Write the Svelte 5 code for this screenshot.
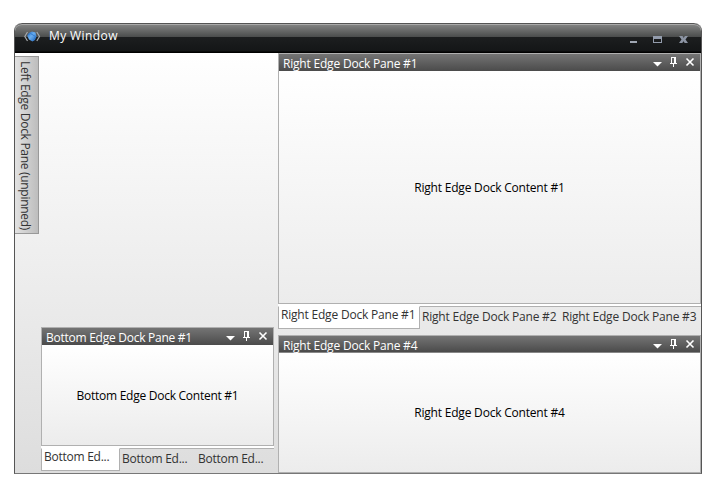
<script>
  const rightTabs = ['Right Edge Dock Pane #1', 'Right Edge Dock Pane #2', 'Right Edge Dock Pane #3'];
  const bottomTabs = ['Bottom Ed...', 'Bottom Ed...', 'Bottom Ed...'];
</script>

{#snippet pane(title, content, kind)}
  <section class="pane {kind}">
    <header>
      <span class="title">{title}</span>
      <svg class="tools" width="44" height="16" viewBox="0 0 44 16">
        <path d="M0 8h9L4.500 12.500z" fill="#fff" />
        <path d="M18.500 3v6M21.500 3v6M22.500 3v6M18 3.500h5M17 9.500h7M20.500 10v3" stroke="#fff" fill="none" />
        <path d="M33.500 4.500l7 7M40.500 4.500l-7 7" stroke="#fff" stroke-width="1.600" fill="none" />
      </svg>
    </header>
    <div class="body"><span>{content}</span></div>
  </section>
{/snippet}

<div class="window">
  <div class="titlebar">
    <svg class="logo" width="18" height="14" viewBox="0 0 18 14">
      <defs>
        <linearGradient id="gem" x1="0" y1="0" x2="1" y2="1">
          <stop offset="0" stop-color="#2467b9" />
          <stop offset=".45" stop-color="#69aef0" />
          <stop offset="1" stop-color="#1b5fb4" />
        </linearGradient>
      </defs>
      <path d="M3.500 3L.8 7.500 3.500 12M12.800 3l2.700 4.500L12.800 12" fill="none" stroke="#a5a9ac" stroke-width="1.200" />
      <path d="M8 2.500l3.500 1 1 4-1.500 3.500-2.500 1.500L5 10.500 3.300 7l1.500-3z" fill="url(#gem)" />
      <path d="M3.500 6l3-1.500 5 3-2 4" fill="none" stroke="#2f78cd" stroke-width=".9" />
    </svg>
    <span class="caption">My Window</span>
    <svg class="controls" width="60" height="12" viewBox="0 0 60 12">
      <path d="M0 8h7v2H0z" fill="#a0a7b3" />
      <path d="M23 3h9v7h-9zM24 6v3h7V6z" fill="#939cac" fill-rule="evenodd" />
      <path d="M49 3h3.500l1.200 1.700L55 3H58L55.500 6.500 58 10h-3.300L53.500 8.300 52.300 10H49L51.500 6.500z" fill="#8b93a2" />
    </svg>
  </div>
  <div class="client">
    <div class="edge"><div class="sidetab"><span>Left Edge Dock Pane (unpinned)</span></div></div>
    <div class="middle">
      {@render pane('Bottom Edge Dock Pane #1', 'Bottom Edge Dock Content #1', 'bottom')}
      <div class="tabs small">
        {#each bottomTabs as tab, i}<div class="tab" class:active={i === 0}><span>{tab}</span></div>{/each}
      </div>
    </div>
    <div class="right">
      {@render pane('Right Edge Dock Pane #1', 'Right Edge Dock Content #1', 'first')}
      <div class="tabs">
        {#each rightTabs as tab, i}<div class="tab" class:active={i === 0}><span>{tab}</span></div>{/each}
      </div>
      {@render pane('Right Edge Dock Pane #4', 'Right Edge Dock Content #4', 'last')}
    </div>
  </div>
</div>

<style>
  :global(body) { background: #fff; }
  * { box-sizing: border-box; }
  .window {
    width: 688px; height: 451px; margin: 23px 0 0 14px;
    border: 1px solid #555; border-top: 0; border-bottom-color: #777;
    border-radius: 8px 8px 0 0; overflow: hidden;
    display: flex; flex-direction: column;
    font: 12px/16px "Open Sans", "Noto Sans", sans-serif;
    letter-spacing: -0.2px; white-space: nowrap;
  }
  .titlebar {
    height: 30px; flex: none; display: flex; align-items: flex-start; padding: 0 11px 0 9px;
    border-top: 1px solid #555;
    border-radius: 7px 7px 0 0;
    box-shadow: inset 0 1px #aaa;
    background: linear-gradient(#858685 0, #4a4c4c 13px, #1c1e1f 13.500px, #141617 27px, #000 28px);
  }
  .logo { margin-top: 5px; }
  .caption { color: #fff; margin: 4px 0 0 7px; letter-spacing: 0.4px; }
  .controls { margin: 9px 0 0 auto; width: 60px; }
  .client { flex: 1; display: flex; background: linear-gradient(#fff, #ddd); }
  .edge { width: 26px; padding-top: 3px; flex: none; }
  .sidetab {
    width: 24px; height: 178px; border: 1px solid #999; border-left: 0; color: #333;
    background: linear-gradient(90deg, #e2e2e2, #bdbdbd);
    writing-mode: vertical-rl; line-height: 20px; padding: 4px 3px 0 0; letter-spacing: -0.3px;
  }
  .middle { width: 233px; flex: none; margin-right: 4px; display: flex; flex-direction: column; justify-content: flex-end; padding-bottom: 2px; letter-spacing: -0.26px; }
  .right { width: 423px; flex: none; display: flex; flex-direction: column; }
  .pane { border: 1px solid #b0b0b0; display: flex; flex-direction: column; flex: none; }
  .pane.bottom { height: 119px; }
  .pane.first { height: 251px; }
  .pane.last { height: 138px; }
  header {
    height: 17px; flex: none; display: flex; padding: 0 3px 0 4px;
    color: #fff; background: linear-gradient(#747474, #4b4b4b);
  }
  .last header { border-bottom: 1px solid #888; }
  .title { line-height: 20px; }
  .last .title { line-height: 19px; }
  .tools { margin-left: auto; flex: none; }
  .body { flex: 1; display: flex; align-items: center; justify-content: center; color: #000; background: linear-gradient(#fff, #ececec); }
  .bottom .body, .first .body { padding-top: 2px; }
  .tabs { display: flex; height: 31px; flex: none; border-top: 2px solid #fff; color: #333; }
  .tab { width: 140px; padding: 2px 0 0 2px; border-top: 1px solid #b0b0b0; }
  .tab.active { width: 142px; height: 23px; background: #fff; border: 1px solid #b0b0b0; border-top-color: #fff; padding: 0 0 0 2px; }
  .tab:last-child { flex: 1; }
  .small { height: 25px; }
  .small .tab { width: 76px; }
  .small .tab.active { width: 79px; }
</style>
